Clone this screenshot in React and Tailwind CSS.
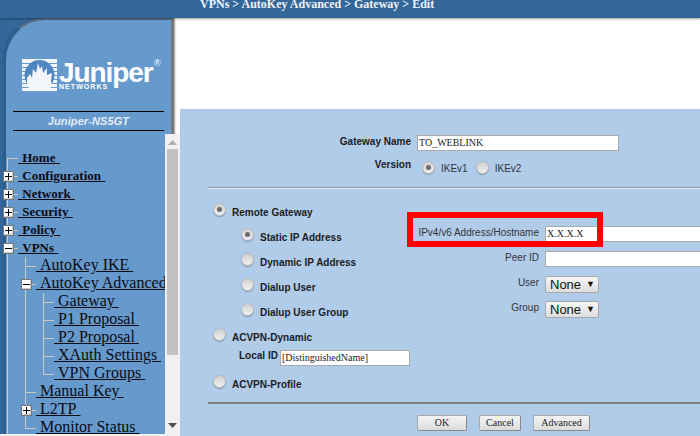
const SANS = "font-['Liberation_Sans',Arial,sans-serif]"
const SERIF = "font-['Liberation_Serif','Times_New_Roman',serif]"

const NAV = [
  { label: 'Home', level: 0, guides: [], first: true },
  { label: 'Configuration', level: 0, box: '+', guides: [] },
  { label: 'Network', level: 0, box: '+', guides: [] },
  { label: 'Security', level: 0, box: '+', guides: [] },
  { label: 'Policy', level: 0, box: '+', guides: [] },
  { label: 'VPNs', level: 0, box: '-', guides: [] },
  { label: 'AutoKey IKE', level: 1, guides: [true] },
  { label: 'AutoKey Advanced', level: 1, box: '-', guides: [true] },
  { label: 'Gateway', level: 2, guides: [true, true] },
  { label: 'P1 Proposal', level: 2, guides: [true, true] },
  { label: 'P2 Proposal', level: 2, guides: [true, true] },
  { label: 'XAuth Settings', level: 2, guides: [true, true] },
  { label: 'VPN Groups', level: 2, guides: [true, true], end: true },
  { label: 'Manual Key', level: 1, guides: [true] },
  { label: 'L2TP', level: 1, box: '+', guides: [true] },
  { label: 'Monitor Status', level: 1, guides: [true], end: true },
]

function Radio({ checked }) {
  return (
    <span className="relative block w-[13px] h-[13px] rounded-full border border-[#b5b8bc] bg-gradient-to-b from-[#d0d0d0] to-[#f0f0f0] shadow-[0_1px_1px_rgba(60,60,60,0.35)] shrink-0">
      {checked && <span className="absolute left-[3px] top-[3px] w-[5px] h-[5px] rounded-full bg-[#6a6a6a]" />}
    </span>
  )
}

function TreeBox({ sign }) {
  return (
    <span className="absolute left-[3px] top-[4px] z-10 w-[11px] h-[11px] bg-white border border-[#777] flex items-center justify-center shadow-[inset_-1px_-1px_0_#ccc]">
      <span className="relative block w-[7px] h-[7px]">
        <span className="absolute left-0 top-[3px] w-[7px] h-[1px] bg-black" />
        {sign === '+' && <span className="absolute left-[3px] top-0 w-[1px] h-[7px] bg-black" />}
      </span>
    </span>
  )
}

function TreeCell({ tee, box, end, first }) {
  return (
    <span className="relative block w-[18px] h-[18px] shrink-0">
      <span className={`absolute left-[7px] w-[1px] bg-[#c9c9c4] ${first ? 'top-[9px] h-[9px]' : end ? 'top-0 h-[10px]' : 'top-0 h-[18px]'}`} />
      {tee && <span className="absolute left-[7px] top-[9px] w-[11px] h-[1px] bg-[#c9c9c4]" />}
      {box && <TreeBox sign={box} />}
    </span>
  )
}

function NavRow({ item }) {
  const top = item.level === 0
  return (
    <div className="flex items-center h-[18px] whitespace-nowrap">
      {item.guides.map((g, i) => (
        <TreeCell key={i} />
      ))}
      <TreeCell tee box={item.box} end={item.end} first={item.first} />
      <span className={`underline text-[#0c0c14] ${SERIF} ${top ? 'text-[13px] font-bold [word-spacing:1px]' : 'text-[16px] -mt-[2px]'}`}>
        {'\u00a0' + item.label + '\u00a0'}
      </span>
    </div>
  )
}

function Logo() {
  return (
    <div className="relative h-[34px] flex items-start text-white">
      <svg width="35" height="32" viewBox="0 0 35 32" className="shrink-0">
        <rect width="35" height="32" fill="#f2f6fb" />
        {[4, 8, 12, 16, 20, 24, 28].map(y => (
          <rect key={y} y={y} width="35" height="1" fill="#6699cc" />
        ))}
        <circle cx="17.5" cy="16" r="15" fill="#4f86c0" />
        <path d="M5 19 L8 15 L10 19 L11 10 L14 14 L16 4 L18 10 L20 7 L21 14 L25 9 L25 16 L30 14 L29 22 L30 27 L27 31 L8 31 L5 26 Z" fill="#f2f6fb" />
      </svg>
      <div className="ml-[2px] relative">
        <div className={`${SANS} font-bold text-[28px] leading-[28px] tracking-[-1.1px] whitespace-nowrap`}>Juniper</div>
        <div className={`${SANS} font-bold text-[7px] leading-[7px] tracking-[1.05px] -mt-[4px]`}>NETWORKS</div>
        <span className={`absolute left-[95px] top-0 ${SANS} text-[9px] leading-[9px]`}>®</span>
      </div>
    </div>
  )
}

function Sidebar() {
  return (
    <aside className="relative w-[180px] h-full shrink-0 bg-white overflow-hidden">
      <div className="absolute left-0 top-0 w-[50px] h-[50px] bg-[#336699]" />
      <div className="absolute left-0 top-0 w-[3px] h-full bg-[#336699]" />
      <div className="relative w-[171px] h-full ml-[3px] rounded-tl-[42px] bg-[#6699cc] border-l-[3px] border-t-[2px] border-r-[3px] border-l-[#2f5d8c] border-t-[#5a7088] border-r-[#777] overflow-hidden shadow-[1px_0_2px_rgba(0,0,0,0.4)]">
        <div className="pl-[16px] pt-[39px]">
          <Logo />
        </div>
      </div>

      <div className="absolute left-[13px] top-[93px] w-[151px] h-[20px] border-y border-black flex items-center justify-center">
        <span className={`${SANS} italic font-bold text-[11px] tracking-[0.1px] text-[#e3ecf7]`}>Juniper-NS5GT</span>
      </div>

      <nav className="absolute left-0 top-[131px] w-[165px] h-[285px] overflow-hidden">
        {NAV.map(item => (
          <NavRow key={item.label} item={item} />
        ))}
      </nav>

      <div className="absolute left-[165px] top-[116px] w-[15px] h-[302px] bg-[#f0f0f0] flex flex-col items-center">
        <svg width="9" height="5" viewBox="0 0 9 5" className="mt-[6px] shrink-0"><path d="M0 5 L4.5 0 L9 5 Z" fill="#b0b0b0" /></svg>
        <div className="w-[11px] h-[206px] bg-[#c1c1c1] mt-[4px] shrink-0" />
        <svg width="9" height="5" viewBox="0 0 9 5" className="mt-[68px] shrink-0"><path d="M0 0 L4.5 5 L9 0 Z" fill="#505050" /></svg>
      </div>
      <div className="absolute left-0 bottom-0 w-[180px] h-[2px] bg-[#f0f0f0]" />
    </aside>
  )
}

function TextInput({ className, children }) {
  return (
    <div className={`h-[16px] bg-white border border-[#a9a9a9] pl-[1px] ${SERIF} text-[10px] leading-[13px] text-[#222] whitespace-nowrap shrink-0 ${className}`}>
      {children}
    </div>
  )
}

function RadioRow({ label, checked, indent, className }) {
  return (
    <div className={`flex ${className || 'h-[25px]'} ${indent ? 'pl-[33px]' : 'pl-[5px]'}`}>
      <Radio checked={checked} />
      <span className={`ml-[6px] mt-[4px] ${SANS} font-bold text-[10px] leading-[12px] text-[#1b1b24] whitespace-nowrap`}>{label}</span>
    </div>
  )
}

function Select() {
  return (
    <div className={`w-[54px] h-[17px] border border-[#a9a9a9] rounded-[2px] bg-gradient-to-b from-[#f6f6f6] to-[#dedede] flex items-center pl-[4px] ${SANS} text-[13px] text-[#111] shrink-0`}>
      None
      <span className="ml-[5px] text-[9px] leading-none">▼</span>
    </div>
  )
}

function FieldRow({ label, children }) {
  return (
    <div className="flex items-start h-[25px]">
      <span className={`w-[138px] pr-[6px] mt-[1px] text-right ${SANS} text-[10px] leading-[12px] text-[#33333d] whitespace-nowrap shrink-0`}>{label}</span>
      {children}
    </div>
  )
}

function Button({ width, children }) {
  return (
    <button className={`${width} h-[16px] border border-[#a9a9a9] border-b-[#8a8a8a] border-r-[#8a8a8a] rounded-[2px] bg-gradient-to-b from-[#f4f4f4] to-[#dcdcdc] ${SERIF} text-[10px] leading-[12px] text-[#222]`}>
      {children}
    </button>
  )
}

function GatewayForm() {
  return (
    <div className="relative flex-1 bg-[#b0cce9] overflow-hidden">
      {/* Name and version */}
      <div className="flex items-start pt-[26px]">
        <span className={`w-[231px] text-right ${SANS} font-bold text-[10px] leading-[12px] mt-[1px] text-[#1b1b24]`}>Gateway Name</span>
        <TextInput className="w-[202px] ml-[6px]">TO_WEBLINK</TextInput>
      </div>
      <div className="flex items-start mt-[7px] h-[28px]">
        <span className={`w-[231px] text-right ${SANS} font-bold text-[10px] leading-[12px] mt-[1px] text-[#1b1b24]`}>Version</span>
        <span className="ml-[11px] mt-[3px]"><Radio checked /></span>
        <span className={`ml-[6px] mt-[5px] ${SANS} text-[10px] leading-[12px] text-[#33333d]`}>IKEv1</span>
        <span className="ml-[8px] mt-[3px]"><Radio /></span>
        <span className={`ml-[6px] mt-[5px] ${SANS} text-[10px] leading-[12px] text-[#33333d]`}>IKEv2</span>
      </div>

      <div className="ml-[28px] mt-[1px] border-t border-[#9a9a9a] h-[2px] bg-[#e6eef7]" />

      {/* Gateway types and their fields */}
      <div className="flex mt-[14px] ml-[28px] h-[200px]">
        <div className="w-[199px] shrink-0">
          <RadioRow label="Remote Gateway" checked />
          <RadioRow label="Static IP Address" checked indent />
          <RadioRow label="Dynamic IP Address" indent />
          <RadioRow label="Dialup User" indent />
          <RadioRow label="Dialup User Group" indent />
          <RadioRow label="ACVPN-Dynamic" className="h-[22px]" />
          <div className="flex items-start h-[25px] pl-[31px]">
            <span className={`${SANS} font-bold text-[10px] leading-[12px] text-[#1b1b24] whitespace-nowrap`}>Local ID</span>
            <TextInput className="w-[130px] ml-[2px]">[DistinguishedName]</TextInput>
          </div>
          <RadioRow label="ACVPN-Profile" />
        </div>
        <div className="pt-[23px] w-[400px] shrink-0">
          <FieldRow label="IPv4/v6 Address/Hostname">
            <TextInput className="w-[200px]">X.X.X.X</TextInput>
          </FieldRow>
          <FieldRow label="Peer ID">
            <TextInput className="w-[200px]" />
          </FieldRow>
          <FieldRow label="User"><Select /></FieldRow>
          <FieldRow label="Group"><Select /></FieldRow>
        </div>
      </div>

      <div className="ml-[28px] h-[2px] bg-[#808080] -mt-[1px]" />

      <div className="flex mt-[11px] pl-[237px] gap-[12px]">
        <Button width="w-[50px]">OK</Button>
        <Button width="w-[42px]">Cancel</Button>
        <Button width="w-[57px]">Advanced</Button>
      </div>

      {/* annotation box over the form */}
      <div className="absolute left-[227px] top-[103px] w-[196px] h-[35px] border-[6px] border-[#ff0000] pointer-events-none" />
    </div>
  )
}

export default function App() {
  return (
    <div className="w-[700px] h-[436px] overflow-hidden bg-white flex flex-col">
      <header className="relative z-10 h-[18px] bg-[#336699] shrink-0 pl-[200px] overflow-hidden shadow-[0_1px_2px_rgba(0,0,0,0.4)]">
        <div className={`${SERIF} font-bold text-[12px] leading-[12px] -mt-[2px] text-[#f0f4fa] whitespace-nowrap`}>
          VPNs &gt; AutoKey Advanced &gt; Gateway &gt; Edit
        </div>
      </header>
      <div className="flex flex-1 min-h-0">
        <Sidebar />
        <div className="flex-1 flex flex-col">
          <div className="h-[91px] bg-white shrink-0" />
          <GatewayForm />
        </div>
      </div>
    </div>
  )
}
